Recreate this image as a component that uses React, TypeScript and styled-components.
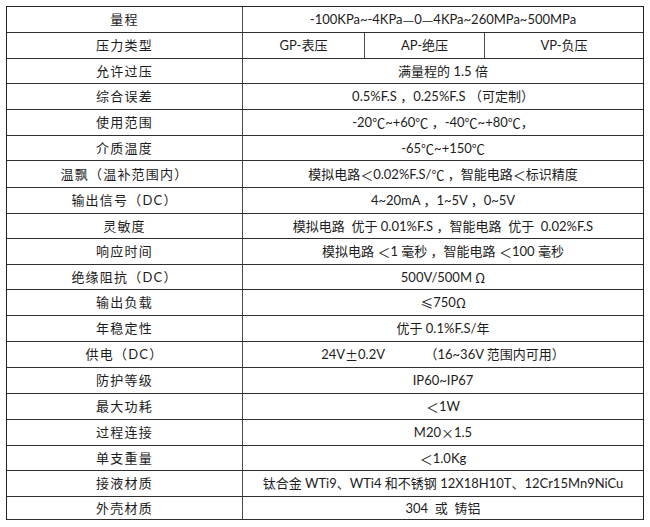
import React from "react";
import styled, { createGlobalStyle } from "styled-components";

const Global = createGlobalStyle`
  html, body { margin: 0; padding: 0; background: #ffffff; }
  body {
    font-family: "Lato", "Noto Sans CJK SC", sans-serif;
    color: #1c1c1c;
  }
`;

const Page = styled.div`
  padding: 6px 0 0 6px;
  width: 650px;
  height: 527px;
  box-sizing: border-box;
`;

const Table = styled.div`
  width: 638px;
  border-top: 1px solid #222;
  border-left: 1px solid #222;
  border-right: 1px solid #222;
  box-sizing: border-box;
`;

const Row = styled.div<{ $h: number }>`
  display: grid;
  grid-template-columns: 236px 1fr;
  height: ${(p) => p.$h}px;
  border-bottom: 1px solid #2e2e2e;
  box-sizing: border-box;
`;

const Cell = styled.div`
  display: flex;
  align-items: center;
  justify-content: center;
  font-size: 13px;
  line-height: 1;
  white-space: pre;
`;

const Label = styled(Cell)`
  border-right: 1px solid #4a4a4a;
  letter-spacing: 1.2px;
`;

const Split = styled.div`
  display: grid;
  grid-template-columns: 122px 120px 1fr;
`;

const SubCell = styled(Cell)<{ $last?: boolean }>`
  border-right: ${(p) => (p.$last ? "none" : "1px solid #4a4a4a")};
`;

const Sym = styled.span`
  font-family: "Noto Sans CJK SC", sans-serif;
`;

type RowData = { label: string; value?: React.ReactNode; h: number };

const rows: RowData[] = [
  {
    label: "量程",
    h: 26,
    value: (
      <>
        -100KPa~-4KPa<Sym>—</Sym>0<Sym>—</Sym>4KPa~260MPa~500MPa
      </>
    ),
  },
  { label: "压力类型", h: 26 },
  { label: "允许过压", h: 25, value: "满量程的 1.5 倍" },
  { label: "综合误差", h: 26, value: "0.5%F.S ，0.25%F.S （可定制）" },
  {
    label: "使用范围",
    h: 26,
    value: (
      <>
        -20<Sym>℃</Sym>~+60<Sym>℃</Sym> ，-40<Sym>℃</Sym>~+80<Sym>℃</Sym>，
      </>
    ),
  },
  {
    label: "介质温度",
    h: 25,
    value: (
      <>
        -65<Sym>℃</Sym>~+150<Sym>℃</Sym>
      </>
    ),
  },
  {
    label: "温飘（温补范围内）",
    h: 27,
    value: (
      <>
        模拟电路<Sym>＜</Sym>0.02%F.S/<Sym>℃</Sym> ，智能电路<Sym>＜</Sym>标识精度
      </>
    ),
  },
  { label: "输出信号（DC）", h: 26, value: "4~20mA ，1~5V ，0~5V" },
  {
    label: "灵敏度",
    h: 25,
    value: "模拟电路  优于 0.01%F.S ，智能电路  优于  0.02%F.S",
  },
  {
    label: "响应时间",
    h: 26,
    value: (
      <>
        模拟电路 <Sym>＜</Sym>1 毫秒 ，智能电路 <Sym>＜</Sym>100 毫秒
      </>
    ),
  },
  {
    label: "绝缘阻抗（DC）",
    h: 25,
    value: (
      <>
        500V/500M <Sym>Ω</Sym>
      </>
    ),
  },
  {
    label: "输出负载",
    h: 26,
    value: (
      <>
        <Sym>≤</Sym>750<Sym>Ω</Sym>
      </>
    ),
  },
  { label: "年稳定性", h: 26, value: "优于 0.1%F.S/年" },
  {
    label: "供电（DC）",
    h: 26,
    value: (
      <>
        24V<Sym>±</Sym>0.2V{"            "}（16~36V 范围内可用）
      </>
    ),
  },
  { label: "防护等级", h: 26, value: "IP60~IP67" },
  {
    label: "最大功耗",
    h: 26,
    value: (
      <>
        <Sym>＜</Sym>1W
      </>
    ),
  },
  {
    label: "过程连接",
    h: 26,
    value: (
      <>
        M20<Sym>×</Sym>1.5
      </>
    ),
  },
  {
    label: "单支重量",
    h: 25,
    value: (
      <>
        <Sym>＜</Sym>1.0Kg
      </>
    ),
  },
  {
    label: "接液材质",
    h: 26,
    value: "钛合金 WTi9、WTi4 和不锈钢 12X18H10T、12Cr15Mn9NiCu",
  },
  { label: "外壳材质", h: 23, value: "304  或  铸铝" },
];

export default function App() {
  return (
    <Page>
      <Global />
      <Table>
        {rows.map((r) => (
          <Row key={r.label} $h={r.h}>
            <Label>{r.label}</Label>
            {r.label === "压力类型" ? (
              <Split>
                <SubCell>GP-表压</SubCell>
                <SubCell>AP-绝压</SubCell>
                <SubCell $last>VP-负压</SubCell>
              </Split>
            ) : (
              <Cell>{r.value}</Cell>
            )}
          </Row>
        ))}
      </Table>
    </Page>
  );
}
